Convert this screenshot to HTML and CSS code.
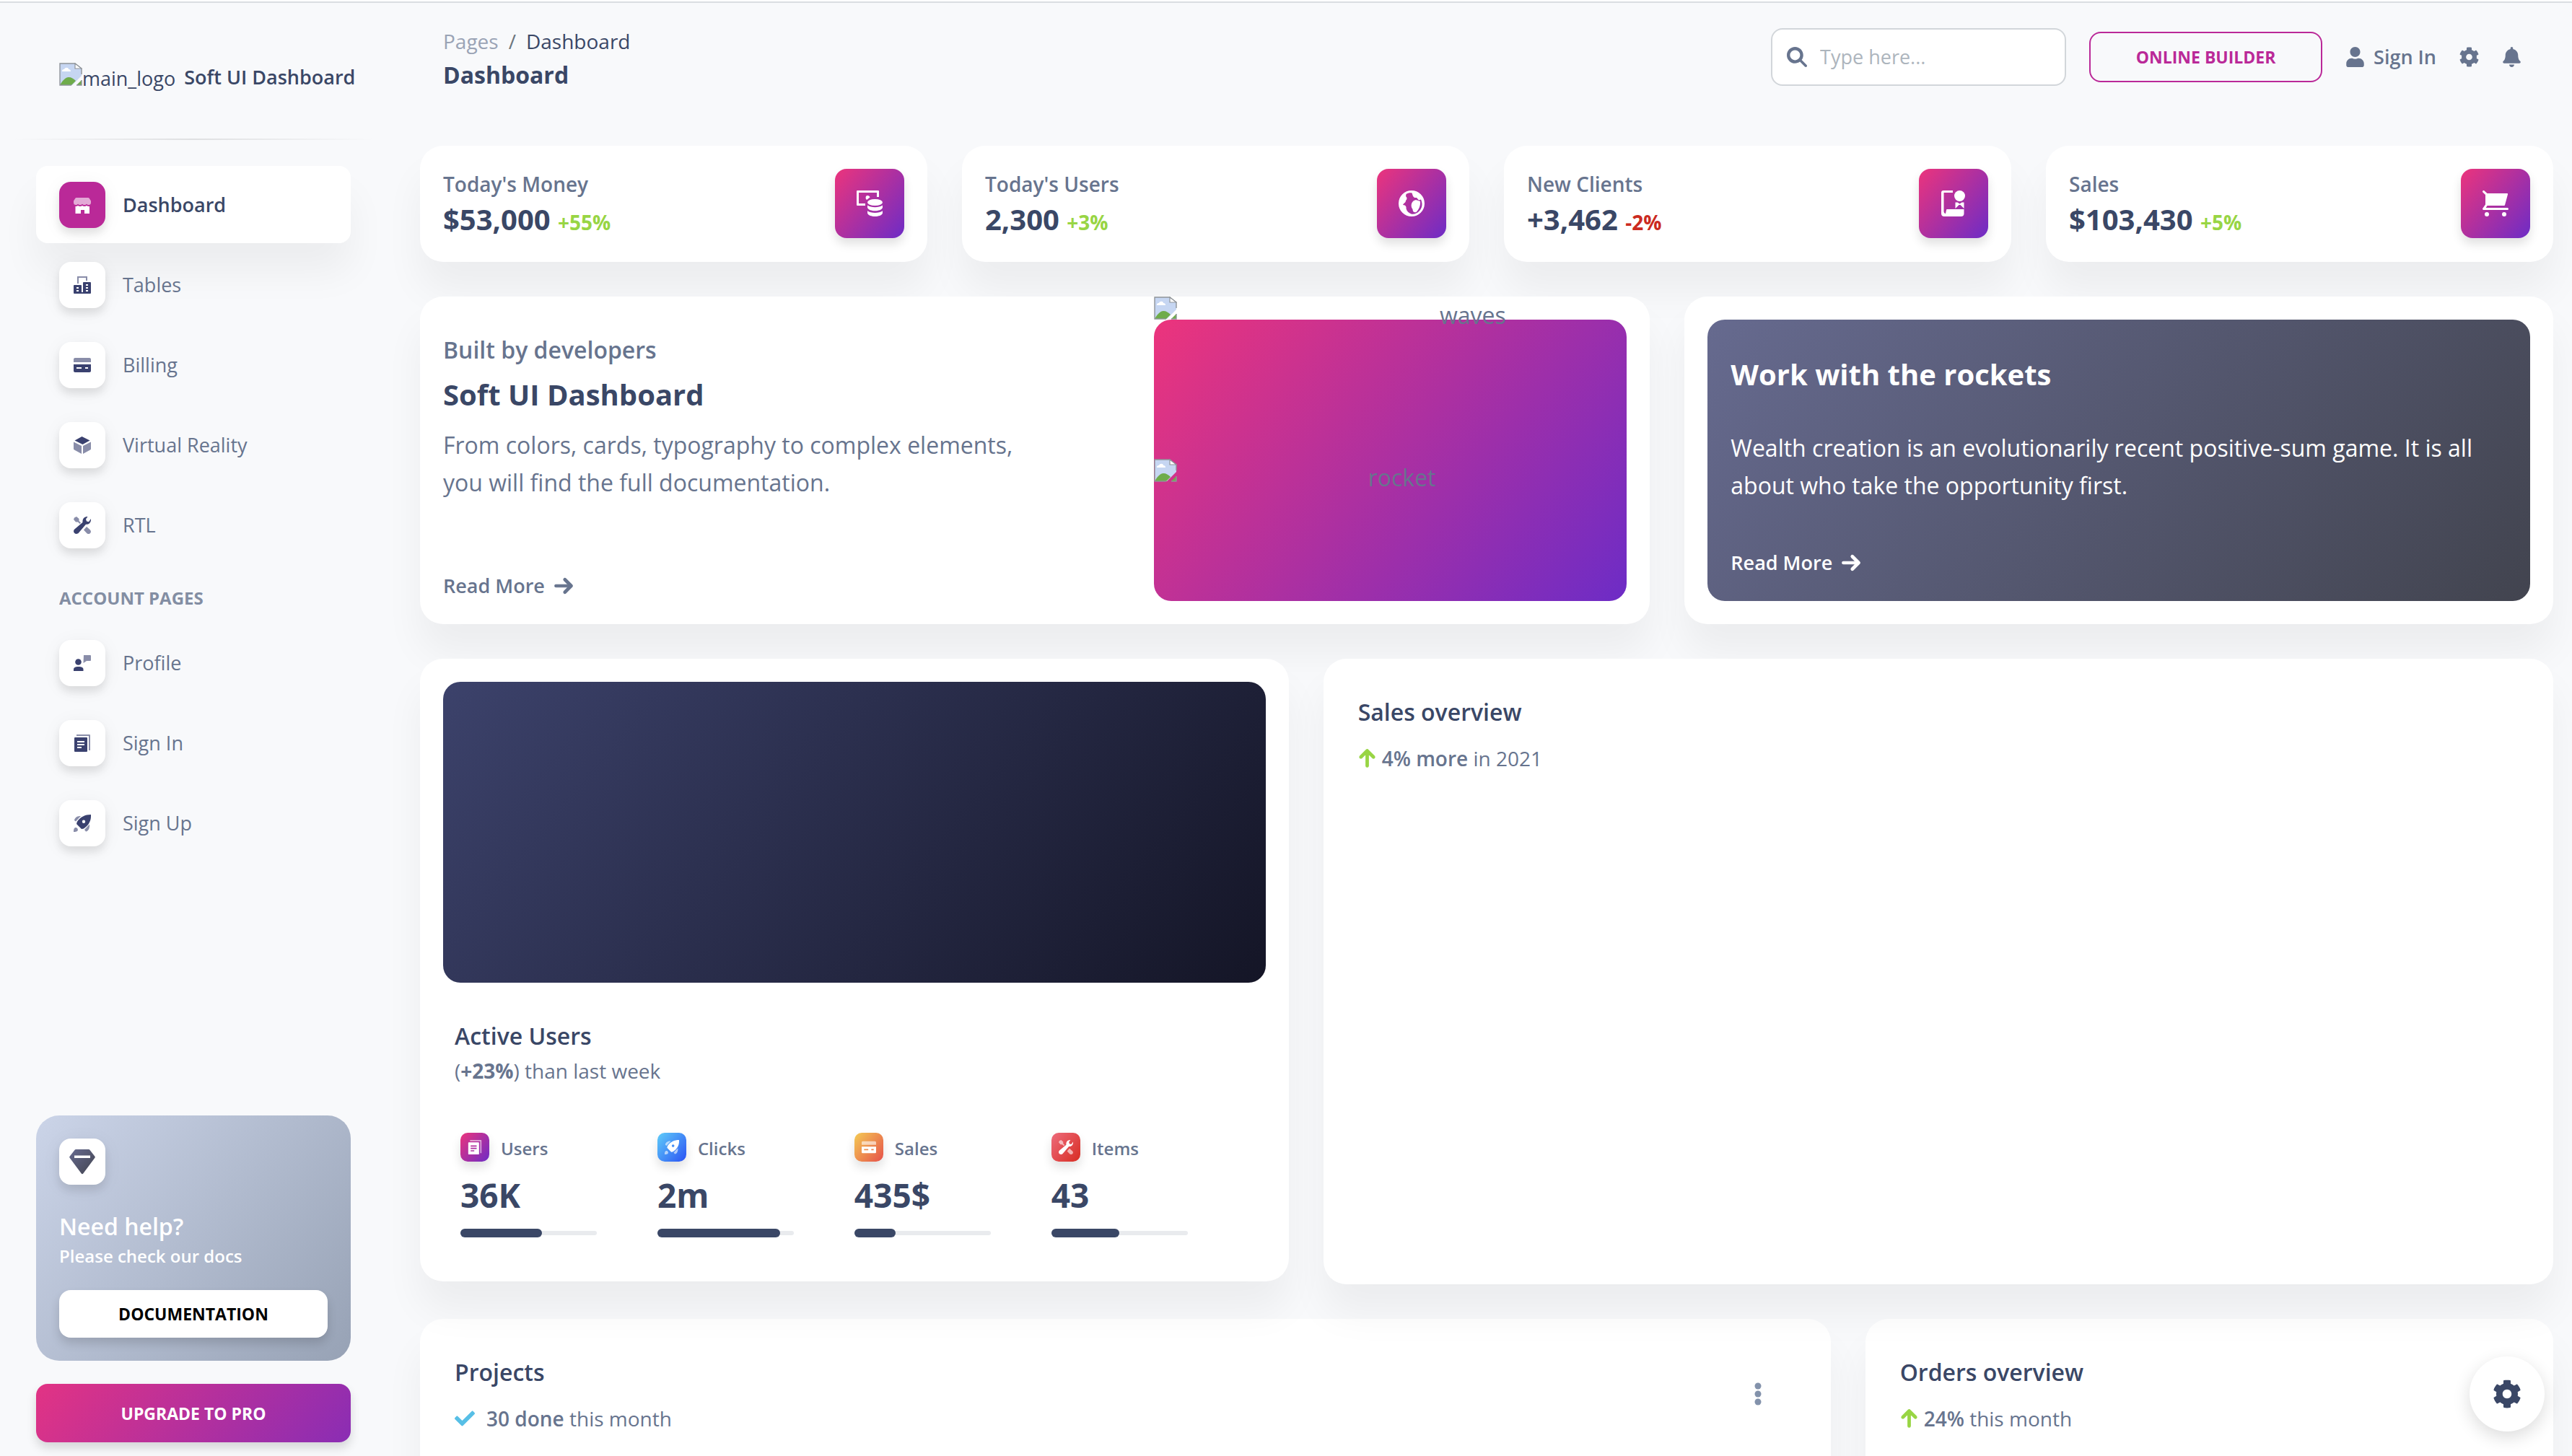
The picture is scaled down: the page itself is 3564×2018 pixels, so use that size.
FILE: index.html
```html
<!DOCTYPE html>
<html lang="en">
<head>
<meta charset="utf-8">
<meta name="viewport" content="width=device-width, initial-scale=1">
<title>Soft UI Dashboard</title>
<link rel="stylesheet" href="styles.css">
</head>
<body>
<svg class="sprite" aria-hidden="true">
  <defs>
    <linearGradient id="gem" x1="0" y1="0" x2="1" y2="1"><stop offset="0" stop-color="#666a8f"/><stop offset="1" stop-color="#42444f"/></linearGradient>
    <symbol id="broken" viewBox="0 0 32 32">
      <path d="M1 1h21l9 7v10L18 31H1z" fill="#c6d6f2"/>
      <path d="M1 31c4-7 8-11 12-11s7 2 10 5l-6 6z" fill="#6fac4b"/>
      <path d="M31 24v7h-7z" fill="#6fac4b"/>
      <path d="M4 12c0-3 2-3 3-3 1-3 6-3 6 0 2 0 3 1 3 3z" fill="#fff"/>
      <path d="M17 31H1V1h21l9 7v8M31 24v7h-7" fill="none" stroke="#8f9499" stroke-width="1.4"/>
      <path d="M22 1v7h9z" fill="#fff" stroke="#8f9499" stroke-width="1.2"/>
    </symbol>
    <symbol id="shop" viewBox="0 0 24 24">
      <path opacity=".6" d="M4 2h16c.8 0 1.400.3 1.800 1L24 6.500V9c0 1.700-1.300 3-3 3-1.200 0-2.200-.5-3-1.300-.8.8-1.800 1.300-3 1.300s-2.200-.5-3-1.300c-.8.8-1.800 1.300-3 1.300s-2.200-.5-3-1.300C5.200 11.500 4.200 12 3 12c-1.700 0-3-1.300-3-3V6.500L2.200 3C2.600 2.300 3.200 2 4 2z"/>
      <path d="M3 14c1.100 0 2.100-.3 3-.9 1.800 1.200 4.200 1.200 6 0 1.800 1.200 4.200 1.200 6 0 .9.600 1.900.9 3 .9h1v10h-7v-5h-5v5H2.500V14z"/>
    </symbol>
    <symbol id="office" viewBox="0 0 24 24">
      <path opacity=".6" d="M5 0h14v6h-2V2H7v8H5z"/>
      <path fill-rule="evenodd" d="M14 8h9a1 1 0 0 1 1 1v14a1 1 0 0 1-1 1H1a1 1 0 0 1-1-1V13a1 1 0 0 1 1-1h9a1 1 0 0 1 1 1v9h2V9a1 1 0 0 1 1-1zM4 15v2h3v-2zM4 19v2h3v-2zM17 11v2h3v-2zM17 15v2h3v-2zM17 19v2h3v-2z"/>
    </symbol>
    <symbol id="card" viewBox="0 0 24 24">
      <path opacity=".6" d="M0 8V4c0-1 .6-2 2-2h20c1.400 0 2 1 2 2v4z"/>
      <path fill-rule="evenodd" d="M0 11h24v9c0 1.200-.8 2-2 2H2c-1.200 0-2-.8-2-2zM4 15v2h7v-2zM16 15v2h4v-2z"/>
    </symbol>
    <symbol id="box" viewBox="0 0 24 24">
      <path d="M11.500 0 22.500 5.500 12.500 11 1.500 5.500z"/>
      <path opacity=".6" d="M0 7.500 11 13v11L1 18.500c-.6-.3-1-.8-1-1.500zM24 7.500 13 13v11l10-5.500c.6-.3 1-.8 1-1.500z"/>
    </symbol>
    <symbol id="tools" viewBox="0 0 24 24">
      <path opacity=".6" d="M1 1.500 4 0l3.500 3v3L10 8.500 8.500 10 6 7.500H3L0 4zM18 14l5 4.500c1.300 1.500 1.300 3 0 4.500s-3.500 1.300-4.800 0L14 18.500z"/>
      <path d="M19.500 0 17 3.500l1 3 3 .7L24 3c.3 5-2.500 8-7 7.800L7 22.500C5.500 24.200 3 24.500 1.300 23c-1.700-1.500-1.700-4 0-5.500L12.500 8C12 3 15 0 19.500 0z"/>
    </symbol>
    <symbol id="person" viewBox="0 0 24 24">
      <path opacity=".6" d="M14 1h9a1 1 0 0 1 1 1v6a1 1 0 0 1-1 1h-5l-4.500 3z"/>
      <circle cx="6.500" cy="10.500" r="4.300"/><path d="M0 23v-2c0-3 2.200-4 6.700-4s6.800 1 6.800 4v2z"/>
    </symbol>
    <symbol id="doc" viewBox="0 0 24 24">
      <path opacity=".6" d="M4 0h18a1 1 0 0 1 1 1v21h-2V2H4z"/>
      <path fill-rule="evenodd" d="M2 4h16a1 1 0 0 1 1 1v18a1 1 0 0 1-1 1H2a1 1 0 0 1-1-1V5a1 1 0 0 1 1-1zM5 9v2h10V9zM5 13v2h10v-2zM5 17v2h6v-2z"/>
    </symbol>
    <symbol id="ship" viewBox="0 0 24 24">
      <path opacity=".6" d="M10 2 3 9.500 1 8c.5-3.500 4-6.500 9-6zM22 13.500 15 21l2 2.500c3.500-.5 5.500-4.500 5-10zM1.500 18.500C4 17 7 20 5.500 22.500 4.500 24 2 24 0 24c0-2 0-4.500 1.500-5.500z"/>
      <path fill-rule="evenodd" d="M24 0c.5 8-2.500 14.500-10 19.500l-3 .5-7-7 .8-3C9.500 3 16 0 24 0zM14 7.500a2.200 2.200 0 1 0 .01 4.400A2.200 2.200 0 0 0 14 7.500z"/>
    </symbol>
    <symbol id="diamond" viewBox="0 0 36 36">
      <path fill="url(#gem)" fill-rule="evenodd" d="M9 1h18c.6 0 1 .2 1.400.7l7 9c.5.600.5 1.400 0 2L19.200 34.500c-.7.9-1.700.9-2.400 0L.6 12.700c-.5-.6-.5-1.400 0-2l7-9C8 1.200 8.400 1 9 1zM7 9.500v3.500h22V9.500z"/>
    </symbol>
    <symbol id="money" viewBox="0 0 36 36">
      <path d="M0 1a1 1 0 0 1 1-1h29a1 1 0 0 1 1 1v8h-3V3H3v15h9v3H1a1 1 0 0 1-1-1z"/>
      <path d="M15 7c2 0 3 1 3.500 2.500L14 13c-2-1.500-2-6 1-6z"/>
      <ellipse cx="25.500" cy="16.500" rx="10.500" ry="4.600"/>
      <path d="M15 20.500c5 3.500 16 3.500 21 0v3.200c-2 6-19 6-21 0zM15 28.300c5 3.500 16 3.500 21 0v3.200c-2 6-19 6-21 0z"/>
    </symbol>
    <symbol id="globe" viewBox="0 0 36 36">
      <path fill-rule="evenodd" d="M18 0a18 18 0 1 1 0 36 18 18 0 0 1 0-36zM10.500 5 10 8c2 2 2 4 0 6 0 3-2.500 3-4 6 4 0 5 3 4.500 5 1 4 3.500 6 7 7.500 8 1.500 15.500-6 15-14-.2-2.500-.8-4.500-1.500-6l-3 1-3-3.500h-3L20 8l-1.500-4.500C15.500 3 13 3.500 10.500 5z"/>
      <path d="M20 15c2-2 5-2.500 7-1l3 1c.5 6-1.500 11-5.500 15-3 1-5-.5-5-4-2.500-3-2.500-8 .5-11z"/>
    </symbol>
    <symbol id="badge" viewBox="0 0 36 36">
      <path d="M1 3a3 3 0 0 1 3-3h13v3H4.500v26c0 1.500 1 3 2.500 3l1-5c.2-.8.500-1 1-1h23.500v6c0 2.500-1.500 4-4 4H5c-2.500 0-4-1.500-4-4z"/>
      <circle cx="26.500" cy="7.500" r="7.500"/><path d="M20.500 16.500h3l3 2 3-2h3v8.500l-5-5h-2l-5 5z"/>
    </symbol>
    <symbol id="cart" viewBox="0 0 36 36">
      <path d="M1.500 0c.5 0 .8.100 1.100.4L6.500 4H34c.8 0 1.200.6 1 1.400l-4 14.800c-.2.600-.5.800-1 .8H6.500L4.700 24H34.500a1.500 1.500 0 0 1 0 3h-33C.2 27-.4 25.700.3 24.700L4 19.500V6L.4 2.600C-.5 1.700.2 0 1.500 0z"/>
      <circle cx="6" cy="33" r="3"/><circle cx="30" cy="33" r="3"/>
    </symbol>
    <symbol id="search" viewBox="0 0 512 512"><path d="M416 208c0 45.900-14.900 88.300-40 122.700L502.600 457.400c12.500 12.500 12.500 32.800 0 45.300s-32.800 12.500-45.300 0L330.700 376c-34.400 25.200-76.800 40-122.700 40C93.100 416 0 322.900 0 208S93.100 0 208 0S416 93.100 416 208zM208 336a128 128 0 1 0 0-256 128 128 0 1 0 0 256z"/></symbol>
    <symbol id="user" viewBox="0 0 448 512"><path d="M224 256c70.700 0 128-57.300 128-128S294.700 0 224 0 96 57.300 96 128s57.300 128 128 128zm89.600 32h-16.700c-22.200 10.200-46.900 16-72.900 16s-50.600-5.800-72.900-16h-16.700C60.200 288 0 348.200 0 422.400V464c0 26.500 21.500 48 48 48h352c26.500 0 48-21.500 48-48v-41.600c0-74.200-60.200-134.400-134.400-134.400z"/></symbol>
    <symbol id="cog" viewBox="8 0 496 512"><path d="M487.400 315.700l-42.600-24.600c4.300-23.200 4.300-47 0-70.200l42.600-24.600c4.900-2.800 7.100-8.600 5.500-14-11.100-35.600-30-67.800-54.700-94.600-3.800-4.100-10-5.100-14.800-2.300L380.800 110c-17.900-15.400-38.500-27.300-60.800-35.100V25.800c0-5.600-3.900-10.500-9.400-11.700-36.700-8.200-74.300-7.800-109.200 0-5.500 1.200-9.400 6.100-9.400 11.700V75c-22.200 7.900-42.800 19.800-60.800 35.100L88.700 85.500c-4.900-2.800-11-1.900-14.800 2.300-24.700 26.700-43.600 58.900-54.700 94.600-1.700 5.400.6 11.200 5.500 14L67.300 221c-4.300 23.200-4.300 47 0 70.200l-42.600 24.600c-4.900 2.800-7.100 8.600-5.500 14 11.100 35.600 30 67.800 54.700 94.600 3.800 4.100 10 5.100 14.800 2.300l42.600-24.600c17.900 15.400 38.500 27.300 60.800 35.100v49.200c0 5.600 3.900 10.500 9.400 11.700 36.700 8.200 74.300 7.800 109.200 0 5.500-1.200 9.400-6.100 9.400-11.700v-49.200c22.200-7.900 42.800-19.800 60.800-35.100l42.600 24.600c4.900 2.800 11 1.900 14.800-2.300 24.700-26.700 43.600-58.900 54.700-94.600 1.500-5.500-.7-11.300-5.600-14.100zM256 336c-44.100 0-80-35.900-80-80s35.900-80 80-80 80 35.900 80 80-35.900 80-80 80z"/></symbol>
    <symbol id="bell" viewBox="0 0 448 512"><path d="M224 512c35.320 0 63.970-28.650 63.970-64H160.030c0 35.350 28.650 64 63.970 64zm215.390-149.710c-19.320-20.760-55.470-51.990-55.470-154.290 0-77.700-54.480-139.900-127.940-155.160V32c0-17.670-14.320-32-31.980-32s-31.980 14.330-31.980 32v20.840C118.560 68.100 64.080 130.300 64.080 208c0 102.300-36.150 133.530-55.470 154.290-6 6.450-8.660 14.160-8.610 21.710.11 16.400 12.980 32 32.100 32h383.800c19.120 0 32-15.600 32.100-32 .05-7.550-2.610-15.270-8.610-21.710z"/></symbol>
    <symbol id="check" viewBox="0 0 512 512"><path d="M173.898 439.404l-166.400-166.400c-9.997-9.997-9.997-26.206 0-36.204l36.203-36.204c9.997-9.998 26.207-9.998 36.204 0L192 312.690 432.095 72.596c9.997-9.997 26.207-9.997 36.204 0l36.203 36.204c9.997 9.997 9.997 26.206 0 36.204l-294.400 294.401c-9.998 9.997-26.207 9.997-36.204-.001z"/></symbol>
    <symbol id="right" viewBox="0 0 448 512"><path stroke="currentColor" stroke-width="22" d="M438.600 278.600c12.500-12.500 12.500-32.800 0-45.300l-160-160c-12.500-12.500-32.800-12.500-45.300 0s-12.500 32.800 0 45.300L338.800 224 32 224c-17.700 0-32 14.300-32 32s14.300 32 32 32l306.700 0L233.400 393.400c-12.500 12.500-12.500 32.800 0 45.300s32.800 12.500 45.300 0l160-160z"/></symbol>
    <symbol id="up" viewBox="-8 0 400 512"><path stroke="currentColor" stroke-width="22" d="M214.600 41.400c-12.500-12.500-32.800-12.500-45.300 0l-160 160c-12.500 12.500-12.500 32.800 0 45.300s32.800 12.500 45.300 0L160 141.200V448c0 17.700 14.300 32 32 32s32-14.300 32-32V141.200L329.400 246.600c12.500 12.500 32.800 12.500 45.300 0s12.500-32.800 0-45.300l-160-160z"/></symbol>
    <symbol id="dots" viewBox="0 0 10 32"><circle cx="5" cy="5" r="4.500"/><circle cx="5" cy="16" r="4.500"/><circle cx="5" cy="27" r="4.500"/></symbol>
  </defs>
</svg>

<div class="shell">
  <aside class="sidebar">
    <a class="brand" href="#">
      <svg class="i32"><use href="#broken"/></svg>
      <span class="brand-alt">main_logo</span>
      <span class="brand-name">Soft UI Dashboard</span>
    </a>
    <hr class="rule">
    <nav class="nav">
      <a class="nav-item active" href="#"><span class="tile"><svg class="i24"><use href="#shop"/></svg></span>Dashboard</a>
      <a class="nav-item" href="#"><span class="tile"><svg class="i24"><use href="#office"/></svg></span>Tables</a>
      <a class="nav-item" href="#"><span class="tile"><svg class="i24"><use href="#card"/></svg></span>Billing</a>
      <a class="nav-item" href="#"><span class="tile"><svg class="i24"><use href="#box"/></svg></span>Virtual Reality</a>
      <a class="nav-item" href="#"><span class="tile"><svg class="i24"><use href="#tools"/></svg></span>RTL</a>
      <h6 class="nav-heading">ACCOUNT PAGES</h6>
      <a class="nav-item" href="#"><span class="tile"><svg class="i24"><use href="#person"/></svg></span>Profile</a>
      <a class="nav-item" href="#"><span class="tile"><svg class="i24"><use href="#doc"/></svg></span>Sign In</a>
      <a class="nav-item" href="#"><span class="tile"><svg class="i24"><use href="#ship"/></svg></span>Sign Up</a>
    </nav>
    <div class="side-foot">
      <section class="help">
        <span class="tile"><svg class="i36"><use href="#diamond"/></svg></span>
        <h6 class="help-title">Need help?</h6>
        <p class="help-text">Please check our docs</p>
        <a class="btn btn-white" href="#">DOCUMENTATION</a>
      </section>
      <a class="btn btn-pro" href="#">UPGRADE TO PRO</a>
    </div>
  </aside>

  <main class="main">
    <header class="topbar">
      <div class="crumbs">
        <ol class="crumb-list"><li><a class="crumb-link" href="#">Pages</a></li><li class="crumb-sep">/</li><li>Dashboard</li></ol>
        <h1 class="page-title">Dashboard</h1>
      </div>
      <div class="tools">
        <label class="search"><svg class="i28"><use href="#search"/></svg><input class="search-input" type="text" placeholder="Type here..." aria-label="Search"></label>
        <a class="btn btn-outline" href="#">ONLINE BUILDER</a>
        <a class="tool tool-sign" href="#"><svg class="i-tool"><use href="#user"/></svg>Sign In</a>
        <button class="tool" type="button" aria-label="Settings"><svg class="i-tool"><use href="#cog"/></svg></button>
        <button class="tool" type="button" aria-label="Notifications"><svg class="i-tool"><use href="#bell"/></svg></button>
      </div>
    </header>

    <div class="grid">
      <section class="panel stat span-3">
        <div><p class="stat-label">Today's Money</p><p class="stat-value">$53,000 <span class="delta up">+55%</span></p></div>
        <span class="stat-icon"><svg class="i36"><use href="#money"/></svg></span>
      </section>
      <section class="panel stat span-3">
        <div><p class="stat-label">Today's Users</p><p class="stat-value">2,300 <span class="delta up">+3%</span></p></div>
        <span class="stat-icon"><svg class="i36"><use href="#globe"/></svg></span>
      </section>
      <section class="panel stat span-3">
        <div><p class="stat-label">New Clients</p><p class="stat-value">+3,462 <span class="delta down">-2%</span></p></div>
        <span class="stat-icon"><svg class="i36"><use href="#badge"/></svg></span>
      </section>
      <section class="panel stat span-3">
        <div><p class="stat-label">Sales</p><p class="stat-value">$103,430 <span class="delta up">+5%</span></p></div>
        <span class="stat-icon"><svg class="i36"><use href="#cart"/></svg></span>
      </section>
    </div>

    <div class="grid">
      <section class="panel intro span-7">
        <div class="intro-text">
          <p class="intro-kicker">Built by developers</p>
          <h2 class="big-title">Soft UI Dashboard</h2>
          <p class="copy">From colors, cards, typography to complex elements, you will find the full documentation.</p>
          <a class="more" href="#">Read More <svg class="i28"><use href="#right"/></svg></a>
        </div>
        <div class="intro-art">
          <div class="missing waves"><svg class="i32"><use href="#broken"/></svg><span class="missing-alt">waves</span></div>
          <div class="missing"><svg class="i32"><use href="#broken"/></svg><span class="missing-alt">rocket</span></div>
        </div>
      </section>
      <section class="panel rockets span-5">
        <div class="rockets-body">
          <h2 class="big-title">Work with the rockets</h2>
          <p class="copy">Wealth creation is an evolutionarily recent positive-sum game. It is all about who take the opportunity first.</p>
          <a class="more" href="#">Read More <svg class="i28"><use href="#right"/></svg></a>
        </div>
      </section>
    </div>

    <div class="grid charts">
      <section class="panel active-users span-5">
        <div class="bars"></div>
        <div class="active-body">
          <h3 class="title">Active Users</h3>
          <p class="sub">(<strong class="bold">+23%</strong>) than last week</p>
          <div class="metrics">
            <div class="metric"><div class="metric-head"><span class="chip pink"><svg class="i20"><use href="#doc"/></svg></span>Users</div><p class="metric-value">36K</p><div class="progress"><div class="fill" style="width:60%"></div></div></div>
            <div class="metric"><div class="metric-head"><span class="chip blue"><svg class="i20"><use href="#ship"/></svg></span>Clicks</div><p class="metric-value">2m</p><div class="progress"><div class="fill" style="width:90%"></div></div></div>
            <div class="metric"><div class="metric-head"><span class="chip orange"><svg class="i20"><use href="#card"/></svg></span>Sales</div><p class="metric-value">435$</p><div class="progress"><div class="fill" style="width:30%"></div></div></div>
            <div class="metric"><div class="metric-head"><span class="chip red"><svg class="i20"><use href="#tools"/></svg></span>Items</div><p class="metric-value">43</p><div class="progress"><div class="fill" style="width:50%"></div></div></div>
          </div>
        </div>
      </section>
      <section class="panel overview span-7">
        <h3 class="title">Sales overview</h3>
        <p class="sub trend"><svg class="i-up"><use href="#up"/></svg><span><strong>4% more</strong> in 2021</span></p>
        <div class="line-chart"></div>
      </section>
    </div>

    <div class="grid lists">
      <section class="panel overview projects span-8">
        <div>
          <h3 class="title">Projects</h3>
          <p class="sub trend done"><svg class="i28"><use href="#check"/></svg><span><strong>30 done</strong> this month</span></p>
        </div>
        <button class="kebab" type="button" aria-label="Project actions"><svg class="i-dots"><use href="#dots"/></svg></button>
      </section>
      <section class="panel overview span-4">
        <h3 class="title">Orders overview</h3>
        <p class="sub trend"><svg class="i-up"><use href="#up"/></svg><span><strong>24%</strong> this month</span></p>
      </section>
    </div>
  </main>
</div>
<button class="fab" type="button" aria-label="Configure"><svg class="i-fab"><use href="#cog"/></svg></button>
</body>
</html>
```
FILE: styles.css
```css
* { box-sizing: border-box; }

body {
  margin: 0;
  border-top: 2px solid #fff;
  background: #f8f9fb;
  color: #67748e;
  font: 400 28px/42px "Open Sans", sans-serif;
}

h1, h2, h3, h6, p, ol { margin: 0; padding: 0; }
a { color: inherit; text-decoration: none; }
button { border: 0; padding: 0; background: none; color: inherit; font: inherit; cursor: pointer; }
svg { display: block; flex: none; fill: currentColor; }
strong { font-weight: 600; }

.sprite { position: absolute; width: 0; height: 0; }
.i20 { width: 20px; height: 20px; }
.i24 { width: 24px; height: 24px; }
.i28 { width: 28px; height: 28px; }
.i32 { width: 32px; height: 32px; }
.i36 { width: 36px; height: 36px; }
.i-tool { width: 27px; height: 28px; }
.i-up { width: 25px; height: 28px; }
.i-dots { width: 10px; height: 32px; }
.i-fab { width: 40px; height: 40px; }

.shell {
  display: flex;
  height: calc(100vh - 2px);
  border-top: 2px solid #dadde1;
}

/* Sidebar */
.sidebar {
  display: flex;
  flex-direction: column;
  flex: none;
  width: 534px;
  padding: 0 48px 19px 50px;
  font-size: 27px;
}
.brand {
  display: flex;
  align-items: flex-start;
  height: 188px;
  padding: 83px 0 0 32px;
  color: #3a4766;
  white-space: nowrap;
}
.brand-alt { line-height: 44px; }
.brand-name { margin-left: 12px; font-weight: 600; line-height: 40px; }
.rule {
  width: 504px;
  height: 2px;
  margin: 0 -34px 36px;
  border: 0;
  background: linear-gradient(90deg, transparent, rgba(0, 0, 0, .1), transparent);
}
.nav { display: flex; flex-direction: column; gap: 4px; }
.nav-item {
  display: flex;
  align-items: center;
  gap: 24px;
  height: 107px;
  padding: 0 32px;
  border-radius: 16px;
}
.nav-item.active {
  background: #fff;
  color: #3a4766;
  font-weight: 600;
  box-shadow: 0 40px 54px rgba(0, 0, 0, .05);
}
.tile {
  display: flex;
  align-items: center;
  justify-content: center;
  width: 64px;
  height: 64px;
  border-radius: 16px;
  background: #fff;
  color: #3a416f;
  box-shadow: 0 8px 12px rgba(0, 0, 0, .09), 0 4px 28px rgba(0, 0, 0, .05);
}
.active .tile { background: #ba2998; color: #fff; }
.nav-heading {
  padding: 26px 32px 14px;
  font-size: 24px;
  line-height: 36px;
  font-weight: 700;
  opacity: .8;
}
.side-foot { display: grid; gap: 32px; margin-top: auto; }
.help {
  padding: 32px;
  border-radius: 32px;
  background: linear-gradient(310deg, #97a2b5, #cbd4e8);
  color: #fff;
}
.help-title { margin-top: 32px; font-size: 32px; line-height: 52px; font-weight: 600; }
.help-text { margin-bottom: 32px; font-size: 24px; line-height: 30px; font-weight: 600; }

.btn {
  display: flex;
  align-items: center;
  justify-content: center;
  border-radius: 16px;
  font-size: 23px;
  line-height: 34px;
  font-weight: 700;
}
.btn-white { height: 66px; background: #fff; color: #000; box-shadow: 0 8px 14px rgba(0, 0, 0, .14); }
.btn-pro {
  height: 81px;
  background: linear-gradient(310deg, #8a2db4, #e23384);
  color: #fff;
  box-shadow: 0 8px 14px rgba(0, 0, 0, .14);
}
.btn-outline { width: 323px; height: 70px; border: 2px solid #ba2998; color: #ba2998; }

/* Main column */
.main {
  flex: 1;
  min-width: 0;
  padding: 0 26px 48px 48px;
  overflow: hidden auto;
  scrollbar-width: none;
}
.topbar {
  display: flex;
  justify-content: space-between;
  height: 198px;
  padding: 32px 44px 0 32px;
}
.crumb-list { display: flex; gap: 14px; list-style: none; color: #3a4766; }
.crumb-link { color: #9aa3b5; }
.crumb-sep { color: #6c757d; }
.page-title { color: #3a4766; font-size: 32px; line-height: 52px; font-weight: 700; }
.tools { display: flex; align-items: center; gap: 32px; height: 86px; font-size: 27px; }
.search {
  display: flex;
  align-items: center;
  gap: 18px;
  width: 409px;
  height: 80px;
  padding: 0 20px;
  border: 2px solid #d2d6da;
  border-radius: 16px;
  background: #fff;
}
.search-input {
  flex: 1;
  min-width: 0;
  padding: 0;
  border: 0;
  outline: 0;
  background: none;
  color: #495057;
  font: inherit;
}
.search-input::placeholder { color: #adb5bd; opacity: 1; }
.tool { display: flex; align-items: center; }
.tool-sign { gap: 12px; font-weight: 600; }

.grid {
  display: grid;
  grid-template-columns: repeat(12, minmax(0, 1fr));
  gap: 48px;
  align-items: start;
  margin-bottom: 48px;
}
.charts { position: relative; z-index: 1; }
.span-3 { grid-column: span 3; }
.span-4 { grid-column: span 4; }
.span-5 { grid-column: span 5; }
.span-7 { grid-column: span 7; }
.span-8 { grid-column: span 8; }
.panel {
  padding: 32px;
  border-radius: 32px;
  background: #fff;
  box-shadow: 0 40px 54px rgba(0, 0, 0, .05);
}

.stat { display: flex; justify-content: space-between; }
.stat-label { font-weight: 600; }
.stat-value { color: #3a4766; font-size: 40px; line-height: 55px; font-weight: 700; }
.delta { font-size: 28px; line-height: 28px; }
.up { color: #98d544; }
.down { color: #cb2a20; }
.stat-icon {
  display: flex;
  align-items: center;
  justify-content: center;
  width: 96px;
  height: 96px;
  border-radius: 16px;
  background: linear-gradient(310deg, #6d2cc6, #ec347c);
  color: #fff;
  box-shadow: 0 8px 14px rgba(0, 0, 0, .12);
}

.intro { display: grid; grid-template-columns: repeat(12, minmax(0, 1fr)); gap: 48px; }
.intro-text { display: flex; flex-direction: column; grid-column: span 6; padding-top: 16px; }
.intro-kicker { margin-bottom: 8px; font-size: 32px; line-height: 52px; font-weight: 600; }
.big-title { font-size: 40px; line-height: 56px; font-weight: 700; }
.intro .big-title { margin-bottom: 16px; color: #3a4766; }
.copy { margin-bottom: 48px; font-size: 32px; line-height: 52px; }
.intro .copy { margin-bottom: 96px; }
.more { display: flex; align-items: center; gap: 12px; margin-top: auto; font-size: 27px; font-weight: 600; }
.intro-art {
  position: relative;
  display: flex;
  align-items: center;
  grid-column: 8 / span 5;
  border-radius: 24px;
  background: linear-gradient(310deg, #6d2cc6, #ec347c);
}
.missing { display: flex; width: 100%; height: 4px; align-items: flex-start; }
.missing-alt { flex: 1; font-size: 32px; line-height: 52px; text-align: center; }
.waves { position: absolute; top: -32px; left: 0; }
.waves .missing-alt { padding-left: 30%; }

.rockets { align-self: stretch; display: flex; }
.rockets-body {
  display: flex;
  flex-direction: column;
  flex: 1;
  padding: 48px 32px 32px;
  border-radius: 24px;
  background: linear-gradient(310deg, #42444f, #666a8f);
  color: #fff;
}
.rockets .big-title { margin-bottom: 48px; }

.title { color: #3a4766; font-size: 32px; line-height: 52px; font-weight: 600; }
.sub { line-height: 44px; }
.bars {
  height: 417px;
  border-radius: 24px;
  background: linear-gradient(310deg, #141526, #3c426b);
}
.active-body { padding: 48px 16px 28px; }
.bold { font-weight: 700; }
.metrics {
  display: grid;
  grid-template-columns: repeat(4, minmax(0, 1fr));
  padding: 64px 8px 0;
}
.metric { padding-right: 84px; }
.metric-head { display: flex; align-items: flex-end; gap: 16px; font-size: 24px; line-height: 36px; font-weight: 600; }
.chip {
  display: flex;
  align-items: center;
  justify-content: center;
  width: 40px;
  height: 40px;
  border-radius: 10px;
  color: #fff;
  box-shadow: 0 8px 14px rgba(0, 0, 0, .12);
}
.pink { background: linear-gradient(310deg, #6d2cc6, #ec347c); }
.blue { background: linear-gradient(310deg, #2b52f4, #5fcdf9); }
.orange { background: linear-gradient(310deg, #e6504a, #f4cb54); }
.red { background: linear-gradient(310deg, #d82c22, #ed6c7c); }
.metric-value { margin-top: 16px; color: #3a4766; font-size: 46px; line-height: 60px; font-weight: 700; }
.progress { display: flex; align-items: center; height: 6px; margin: 20px 0 4px; border-radius: 4px; background: #e9ebee; }
.fill { height: 12px; border-radius: 6px; background: #3a4766; }

.overview { padding: 48px; }
.trend { display: flex; align-items: center; gap: 8px; margin-top: 16px; }
.trend svg { color: #98d544; }
.trend.done { gap: 16px; }
.trend.done svg { color: #57bfe6; }
.charts .overview { padding-bottom: 0; }
.lists .overview { padding-bottom: 96px; }
.line-chart { height: 707px; }
.projects { display: flex; justify-content: space-between; }
.kebab { align-self: center; padding: 0 48px; color: #8392ab; }

.fab {
  position: fixed;
  right: 38px;
  bottom: 34px;
  z-index: 2;
  display: flex;
  align-items: center;
  justify-content: center;
  width: 104px;
  height: 104px;
  border-radius: 50%;
  background: #fff;
  color: #3a4766;
  box-shadow: 0 8px 24px rgba(0, 0, 0, .14);
}
```
